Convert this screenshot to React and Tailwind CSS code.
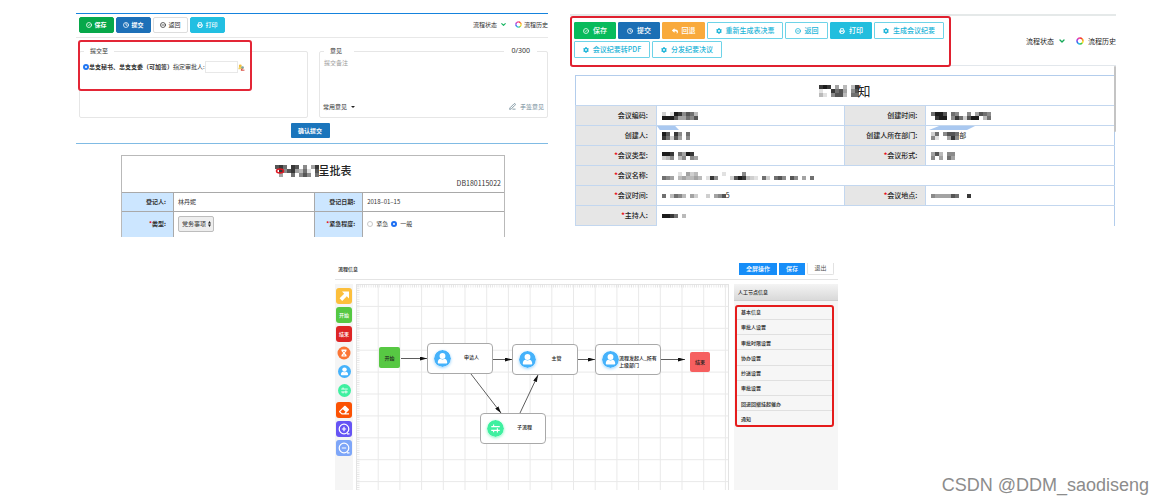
import React from "react";
import {
  CircleCheck, Clock, CircleMinus, Printer, ChevronDown, PenLine,
} from "lucide-react";
import { FaReply, FaEraser, FaCog } from "react-icons/fa";

/* Censored text drawn as grey cells: 0 is black, 9 is near white, "." is empty. */
const SHADES = ["#1c1c1c", "#383838", "#555555", "#707070", "#8a8a8a", "#a3a3a3", "#bababa", "#cfcfcf", "#e1e1e1", "#f1f1f1"];

function Mosaic({ rows, cell = 4, className = "" }) {
  const width = Math.max(...rows.map((r) => r.length)) * cell;
  const height = rows.length * cell;
  return (
    <svg width={width} height={height} className={"shrink-0 " + className} shapeRendering="crispEdges" aria-hidden="true">
      {rows.map((row, y) =>
        row.split("").map((c, x) =>
          c === "." ? null : <rect key={x + "-" + y} x={x * cell} y={y * cell} width={cell} height={cell} fill={SHADES[+c]} />
        )
      )}
    </svg>
  );
}

function Ring({ className }) {
  const colors = ["#f5392f", "#f99a1c", "#f4df26", "#43c84b", "#25b9e0", "#3b62ec", "#a43be0", "#ee3d9c"];
  return (
    <svg viewBox="0 0 16 16" className={"shrink-0 " + className} aria-hidden="true">
      {colors.map((c, i) => (
        <circle key={c} cx="8" cy="8" r="6" fill="none" stroke={c} strokeWidth="3" strokeDasharray="4.8 33" transform={`rotate(${i * 45 - 90} 8 8)`} />
      ))}
    </svg>
  );
}

function Person({ className }) {
  return (
    <svg viewBox="0 0 18 18" className={"shrink-0 " + className} aria-hidden="true">
      <circle cx="9" cy="9" r="9" fill="#45b2fb" />
      <circle cx="9" cy="6.4" r="3.1" fill="#fff" />
      <path d="M4 13.2c0-2.6 1.4-4 3-4 .6.6 1.2.8 2 .8s1.4-.2 2-.8c1.600 0 3 1.400 3 4 0 .7-.5 1-1.100 1H5.100C4.500 14.200 4 13.900 4 13.200Z" fill="#fff" />
    </svg>
  );
}

function Swap({ className }) {
  return (
    <svg viewBox="0 0 18 18" className={"shrink-0 " + className} aria-hidden="true">
      <circle cx="9" cy="9" r="9" fill="#3ff0a0" />
      <path d="M4.500 7h9M4.500 11h9M7 4.800V7M11 8.800v4.400M7 13V11" stroke="#fff" strokeWidth="1.200" fill="none" />
    </svg>
  );
}

function Status({ large }) {
  return (
    <div className={large ? "flex items-center text-[7px] leading-none" : "flex items-center text-[6px] leading-none"}>
      <span>流程状态</span>
      <ChevronDown className={large ? "ml-1 size-2 text-[#14a957]" : "ml-[3px] size-[7px] text-[#1cb765]"} strokeWidth={4} />
      <a href="#history" className={large ? "ml-[10px] flex items-center gap-1" : "ml-2 flex items-center gap-[2px]"}>
        <Ring className={large ? "size-2" : "size-[7px]"} />
        流程历史
      </a>
    </div>
  );
}

const leftButtons = [
  ["保存", CircleCheck, "bg-[#07a84a] border-[#07a84a] text-white font-bold"],
  ["提交", Clock, "bg-[#1d70b8] border-[#1d70b8] text-white font-bold"],
  ["返回", CircleMinus, "bg-white border-[#dddddd] text-[#333]"],
  ["打印", Printer, "bg-[#22bfe2] border-[#22bfe2] text-white font-medium"],
];

const labelLeft = "border-r border-[#a9a9a9] bg-[#cce6ff] p-0 pr-[7px] text-right font-bold";

function ApprovalForm() {
  return (
    <section className="relative self-start pt-[13px] text-[6px] leading-none text-[#333]">
      <div className="h-px bg-[#1583dd]" />
      <header className="flex items-start justify-between border-b border-[#e8e8e8] pt-[3px] pb-1 pl-[3px]">
        <div className="flex gap-[2px]">
          {leftButtons.map(([label, Icon, tone]) => (
            <button key={label} className={"flex h-4 w-[35px] items-center justify-center gap-[2px] rounded-[2px] border " + tone}>
              <Icon className="size-[6px]" strokeWidth={3} />
              {label}
            </button>
          ))}
        </div>
        <div className="pt-[4px]"><Status /></div>
      </header>

      <div className="grid grid-cols-[1fr_1fr] gap-[11px] pt-[9px] pl-[3px]">
        <fieldset className="h-[71px] min-w-0 rounded-[2px] border border-[#e6e6e6]">
          <legend className="ml-[4px] px-[6px] leading-[8px]">提交至</legend>
          <div className="flex items-center pt-[6px] pl-[3px] whitespace-nowrap">
            <input id="secretary" type="radio" name="target" defaultChecked className="m-0 size-[6px] shrink-0 appearance-none rounded-full border-2 border-[#2277f2] bg-white" />
            <label htmlFor="secretary" className="font-bold">总支秘书、总支支委（可加签）</label>
            <label htmlFor="approver">指定审批人:</label>
            <input id="approver" className="h-3 w-[33px] min-w-0 border border-[#e8e8e8] bg-white" />
            <button aria-label="选择审批人" className="shrink-0">
              <svg viewBox="0 0 8 8" className="size-[7px]">
                <circle cx="2.600" cy="2.200" r="1.700" fill="#f0bd3d" />
                <path d="M.4 6c0-2 1-2.800 2.200-2.800S5 4 5 6Z" fill="#efcf62" />
                <circle cx="5.200" cy="4" r="1.500" fill="#7ba5a0" />
                <path d="M3.200 7.600c0-1.700.8-2.500 2-2.500s2.200.8 2.200 2.500Z" fill="#d8473c" />
                <path d="M5 6h2v1H5Z" fill="#f4f0e8" />
              </svg>
            </button>
          </div>
        </fieldset>
        <div className="relative">
          <fieldset className="h-[71px] min-w-0 rounded-[2px] border border-[#e6e6e6]">
            <legend className="ml-[4px] pr-3 pl-[6px] leading-[8px]"><label htmlFor="remark">意见</label></legend>
            <textarea id="remark" placeholder="提交备注" className="block h-[48px] w-full resize-none pt-[5px] pl-1 placeholder:text-[#9a9a9a]" />
            <div className="flex items-center justify-between px-[3px]">
              <button className="flex items-center gap-1">常用意见
                <svg viewBox="0 0 4 2" className="h-[2px] w-1"><path d="M0 0h4L2 2Z" fill="#222" /></svg>
              </button>
              <button className="flex items-center gap-1 text-[#78909c]"><PenLine className="size-[7px]" strokeWidth={3} />手签意见</button>
            </div>
          </fieldset>
          <span className="absolute top-0 right-[11px] bg-white px-[7px] font-['Noto_Sans','Noto_Sans_CJK_SC',sans-serif] text-[7px] leading-[8px]">0/300</span>
        </div>
      </div>

      <div className="flex justify-center pt-[5px] pb-[5px] pr-1">
        <button className="h-[15px] w-[39px] rounded-[1px] bg-[#1b75bc] font-bold text-white">确认提交</button>
      </div>
      <div className="h-px bg-[#80bbe4]" />

      <div className="mt-[11px] mr-[43px] ml-[45px] border border-b-0 border-[#b9b9b9]">
        <div className="pt-[8px] pb-[5px]">
          <h2 className="relative flex items-center justify-center text-[11px] leading-[13px] font-medium text-[#222]">
            <Mosaic cell={4} rows={["213.12.4.51", ".14215638.2", ".5..3.424.3"]} />
            呈批表
            <svg viewBox="0 0 10 6" className="absolute left-[153px] h-[6px] w-[10px]" aria-hidden="true">
              <ellipse cx="5" cy="3" rx="3.500" ry="2" fill="none" stroke="#e01722" strokeWidth="1.500" />
            </svg>
          </h2>
          <p className="pt-[3px] pr-[3px] text-right text-[7px] leading-none">DB180115022</p>
        </div>
        <table className="w-full table-fixed border-collapse">
          <colgroup><col className="w-[13.500%]" /><col className="w-[37%]" /><col className="w-[12.500%]" /><col className="w-[37%]" /></colgroup>
          <tbody>
            <tr className="h-[19px] border-t border-[#a9a9a9]">
              <th className={labelLeft}>登记人:</th>
              <td className="border-r border-[#a9a9a9] p-0 pl-1">林丹妮</td>
              <th className={labelLeft}>登记日期:</th>
              <td className="p-0 pl-1">2018–01–15</td>
            </tr>
            <tr className="h-[25px] border-t border-[#a9a9a9]">
              <th className={labelLeft}><span className="text-red-600">*</span><label htmlFor="kind">类型:</label></th>
              <td className="border-r border-[#a9a9a9] p-0 pl-1">
                <span className="relative flex w-[36px] items-center">
                  <select id="kind" className="h-4 w-[36px] appearance-none rounded-[2px] border border-[#bdbdbd] bg-[#eeeeee] px-[3px] text-[6px] leading-none">
                    <option>党务事项</option>
                  </select>
                  <svg viewBox="0 0 3 6" className="pointer-events-none absolute right-[3px] h-[6px] w-[3px]"><path d="M0 2.500 1.500 0 3 2.500ZM0 3.500h3L1.500 6Z" fill="#222" /></svg>
                </span>
              </td>
              <th className={labelLeft}><span className="text-red-600">*</span>紧急程度:</th>
              <td className="p-0 pl-1">
                <div className="flex items-center gap-[3px]">
                  <input id="urgent" type="radio" name="urgency" className="m-0 size-[6px] appearance-none rounded-full border border-[#c8c8c8] bg-white" />
                  <label htmlFor="urgent">紧急</label>
                  <input id="normal" type="radio" name="urgency" defaultChecked className="m-0 size-[6px] appearance-none rounded-full border-2 border-[#1d6ff2] bg-white" />
                  <label htmlFor="normal">一般</label>
                </div>
              </td>
            </tr>
          </tbody>
        </table>
      </div>
      <div className="pointer-events-none absolute top-[40px] left-[2px] h-[51px] w-[174px] rounded-[3px] border-2 border-[#e32636]" />
    </section>
  );
}

const outline = "border-[#6ed3e8] bg-white text-[#1bb4d8]";
const rightButtons = [
  ["保存", CircleCheck, "w-[42px] border-[#08bb5c] bg-[#08bb5c] text-white"],
  ["提交", Clock, "w-[42px] border-[#1b6fb5] bg-[#1b6fb5] text-white"],
  ["回退", FaReply, "w-[43px] border-[#f9aa3c] bg-[#f9aa3c] text-white"],
  ["重新生成表决票", FaCog, "w-[76px] " + outline],
  ["返回", CircleMinus, "w-[43px] " + outline],
  ["打印", Printer, "w-[42px] border-[#22bede] bg-[#22bede] text-white"],
  ["生成会议纪要", FaCog, "w-[70px] " + outline],
  ["会议纪要转PDF", FaCog, "w-[76px] " + outline],
  ["分发纪要决议", FaCog, "w-[70px] " + outline],
];

const meetingRows = [
  [["会议编码:", ["7.8014236", "000255342"]], ["创建时间:", ["3002.34..4.5234", ".100.4137200.63"]]],
  [["创建人:", ["02.14.3", "13725.4"]], ["创建人所在部门:", ["73.4223", "48..514"], "部"]],
  [["*会议类型:", ["001.3501", "764.64.45"]], ["*会议形式:", ["526.44", "4.5.35"]]],
  [["*会议名称:", ["....8.576......8....4............", "345.656656.814...7201678.37.324.24.5.3"]]],
  [["*会议时间:", ["3.6346.57..7.542"], "5"], ["*会议地点:", ["4555523..1"]]],
  [["*主持人:", ["0013.6"]]],
];

function Label({ text }) {
  const required = text.startsWith("*");
  return (
    <th className="border border-[#c3d7ef] bg-[#e6e6e6] p-0 pr-2 text-right font-medium">
      {required && <span className="font-bold text-red-600">*</span>}
      {required ? text.slice(1) : text}
    </th>
  );
}

function MeetingNotice() {
  return (
    <section className="relative self-start pt-[14px] text-[7px] leading-none text-[#222]">
      <div className="h-[2px] bg-[#e5e9e9]" />
      <header className="flex items-start justify-between border-b border-[#e2e7ec] pt-[6px] pb-[7px] pl-[4px]">
        <div className="flex max-w-[374px] flex-wrap gap-[2px]">
          {rightButtons.map(([label, Icon, tone]) => (
            <button key={label} className={"flex h-[17px] items-center justify-center gap-1 rounded-[1px] border font-medium whitespace-nowrap " + tone}>
              <Icon className="size-[6px]" strokeWidth={Icon === FaCog || Icon === FaReply ? 0 : 3} />
              {label}
            </button>
          ))}
        </div>
        <div className="pt-[15px]"><Status large /></div>
      </header>
      <div className="pt-[9px] pr-px pl-[5px]">
        <div className="flex h-[30px] items-center justify-center border border-b-0 border-[#b3cdec] text-[13px]">
          <h2 className="flex items-center">
            <Mosaic cell={4} className="mr-[-2px]" rows={["101.5.6.61", "8..1325.42", "68.4226.33"]} />
            知
          </h2>
        </div>
        <table className="w-full table-fixed border-collapse border-x border-[#b3cdec]">
          <colgroup><col className="w-[15%]" /><col className="w-[35%]" /><col className="w-[15%]" /><col className="w-[35%]" /></colgroup>
          <tbody>
            {meetingRows.map((cells, i) => (
              <tr key={i} className="h-5 border-t border-[#c3d7ef]">
                {cells.map(([label, rows, tail]) => (
                  <React.Fragment key={label}>
                    <Label text={label} />
                    <td colSpan={cells.length === 1 ? 3 : 1} className="p-0 pl-[5px]">
                      <span className="relative flex items-center">
                        <Mosaic rows={rows} />
                        {tail}
                        {i === 1 && (
                          <svg viewBox="0 0 46 4" preserveAspectRatio="none" className={label === "创建人:" ? "absolute -top-[6px] -left-[5px] h-1 w-[22px]" : "absolute -top-[6px] -left-[2px] h-1 w-[46px]"} aria-hidden="true">
                            <path d={label === "创建人:" ? "M0 0h38l8 4H6Z" : "M10 0h36l-8 4H0Z"} fill="#a9c8f0" />
                          </svg>
                        )}
                      </span>
                    </td>
                  </React.Fragment>
                ))}
              </tr>
            ))}
          </tbody>
        </table>
      </div>
      <div className="pointer-events-none absolute top-[16px] left-0 h-[51px] w-[381px] rounded-[3px] border-2 border-[#e0202f]" />
      <div className="absolute top-[66px] right-0 h-[66px] w-[2px] rounded-full bg-[#c4c4c4]" />
    </section>
  );
}

const settings = ["基本信息", "审批人设置", "审批时限设置", "协办设置", "抄送设置", "审批设置", "回退回撤挂起催办", "通知"];

const nodes = [
  ["申请人", "left-[70px] top-[58px] w-[66px]", "person"],
  ["主管", "left-[155px] top-[59px] w-[66px]", "person"],
  ["流程发起人_所有上级部门", "left-[238px] top-[59px] w-[66px]", "person"],
  ["子流程", "left-[123px] top-[128px] w-[66px]", "swap"],
];

const links = [
  [44, 73.500, 70, 73.500], [136, 74.500, 155, 74.500], [221, 74.500, 238, 74.500],
  [304, 74.500, 328, 74.500], [114, 89, 144, 128], [163, 128, 181, 90],
];

const tool = "flex size-4 items-center justify-center rounded-[3px] text-white ";

function FlowDesigner() {
  return (
    <section className="text-[5px] leading-none font-medium text-[#222]">
      <header className="flex items-start justify-between border-b border-[#e4e4e4] pt-px pr-1 pb-1 pl-[3px]">
        <h2 className="pt-[3px]">流程信息</h2>
        <div className="flex gap-[2px] text-[6px]">
          <button className="h-3 w-[38px] bg-[#168df8] font-medium text-white">全屏操作</button>
          <button className="h-3 w-[26px] bg-[#168df8] font-medium text-white">保存</button>
          <button className="h-3 w-[27px] rounded-b-[2px] border border-t-0 border-[#e2e2e2] font-normal text-[#555]">退出</button>
        </div>
      </header>
      <div className="grid h-[210px] grid-cols-[18px_1fr_104px] pt-1">
        <aside className="flex flex-col items-center gap-[3px] bg-[#f5f5f5] pt-1">
          <button aria-label="连线" className={tool + "bg-[#fcbf3c]"}>
            <svg viewBox="0 0 16 16" className="size-4"><path d="M6 3.500h7v7l-2.200-2.200-4.600 4.600-2.600-2.600 4.600-4.600Z" fill="#fff" /></svg>
          </button>
          <button className={tool + "bg-[#55c843]"}>开始</button>
          <button className={tool + "bg-[#dd2525]"}>结束</button>
          <button aria-label="定时" className="flex size-4 items-center justify-center">
            <svg viewBox="0 0 14 14" className="size-[14px]"><circle cx="7" cy="7" r="6.500" fill="#fb7535" /><path d="M4.500 3.500h5v1.500L7.800 7l1.700 2v1.500h-5V9l1.700-2-1.700-2Z" fill="#fff" /><path d="M6 5h2L7 6.300ZM6 9.500h2L7 8.300Z" fill="#fb7535" /></svg>
          </button>
          <button aria-label="人工节点" className="flex size-4 items-center justify-center"><Person className="size-[13px]" /></button>
          <button aria-label="子流程" className="flex size-4 items-center justify-center"><Swap className="size-[13px]" /></button>
          <button aria-label="清除" className={tool + "bg-[#fb5204]"}><FaEraser className="size-[10px]" /></button>
          <button aria-label="放大" className={tool + "bg-[#6654f4]"}>
            <svg viewBox="0 0 16 16" className="size-4" fill="none" stroke="#fff" strokeWidth="1.200"><circle cx="8" cy="8" r="4.800" /><path d="M8 5.800v4.400M5.800 8h4.400M11 12.800h2.500" /></svg>
          </button>
          <button aria-label="缩小" className={tool + "bg-[#7ea6f8]"}>
            <svg viewBox="0 0 16 16" className="size-4" fill="none" stroke="#fff" strokeWidth="1.200"><circle cx="8" cy="8" r="4.800" /><path d="M5.800 8h4.400M11 12.800h2.500" /></svg>
          </button>
        </aside>

        <div className="relative mr-[5px] ml-[3px] overflow-hidden border-t border-r border-l border-[#e3e3e3]">
          <svg className="absolute inset-0 size-full" aria-hidden="true">
            <defs>
              <pattern id="grid" width="21.700" height="21.900" patternUnits="userSpaceOnUse">
                <path d="M21.200 0v21.900M0 21.400h21.700" stroke="#e9e9e9" fill="none" />
              </pattern>
              <pattern id="ticksX" width="2.170" height="4" patternUnits="userSpaceOnUse"><path d="M1 0v2.500" stroke="#d4d4d4" strokeWidth=".6" /></pattern>
              <pattern id="ticksY" width="4" height="2.190" patternUnits="userSpaceOnUse"><path d="M0 1h2.500" stroke="#d4d4d4" strokeWidth=".6" /></pattern>
              <marker id="arrow" viewBox="0 0 7 4" refX="7" refY="2" markerWidth="7" markerHeight="4" markerUnits="userSpaceOnUse" orient="auto"><path d="M0 0 7 2 0 4Z" fill="#111" /></marker>
            </defs>
            <rect width="100%" height="100%" fill="url(#grid)" />
            <rect width="100%" height="4" fill="url(#ticksX)" />
            <rect width="4" height="100%" fill="url(#ticksY)" />
            {links.map(([x1, y1, x2, y2]) => (
              <line key={x1} x1={x1} y1={y1} x2={x2} y2={y2} stroke="#333" strokeWidth=".8" markerEnd="url(#arrow)" />
            ))}
          </svg>
          <div className="absolute top-[62px] left-[22px] flex size-[21px] items-center justify-center rounded-[2px] bg-[#57c843]">开始</div>
          {nodes.map(([label, place, kind]) => (
            <div key={label} className={"absolute flex h-[31px] items-center rounded-[4px] border border-[#a9a9a9] bg-white pl-[6px] " + place}>
              {kind === "person"
                ? <Person className="size-[17px] rounded-full shadow-[0_1px_3px_#9fd4fb]" />
                : <Swap className="size-[17px] rounded-full shadow-[0_1px_3px_#8ff5c5]" />}
              <span className={label.length > 4 ? "flex-1 pt-1 leading-[7px]" : "flex-1 pb-[3px] text-center leading-[7px]"}>{label}</span>
            </div>
          ))}
          <div className="absolute top-[67px] left-[333px] flex size-[20px] items-center justify-center rounded-[2px] bg-[#f65f5f]">结束</div>
        </div>

        <aside className="relative bg-[#f6f6f6]">
          <h3 className="flex h-[17px] items-center border-b border-[#cfcfcf] bg-linear-to-b from-[#f4f4f4] to-[#d9d9d9] pl-1">人工节点信息</h3>
          <ul className="mt-1 grid h-[122px] auto-rows-fr pr-[5px] pl-[3px]">
            {settings.map((s) => (
              <li key={s} className="flex items-center border-b border-[#e0e0e0] pl-1 last:border-b-0">{s}</li>
            ))}
          </ul>
          <div className="pointer-events-none absolute top-[21px] left-px h-[122px] w-[99px] rounded-[3px] border-2 border-[#e51c1c]" />
        </aside>
      </div>
    </section>
  );
}

export default function App() {
  return (
    <main lang="zh-CN" className="relative min-h-screen bg-white font-['Noto_Sans_CJK_SC',sans-serif]">
      <div className="grid grid-cols-[472fr_546fr] gap-[22px] pr-[49px] pl-[76px]">
        <ApprovalForm />
        <MeetingNotice />
      </div>
      <div className="grid grid-cols-[335fr_503fr_327fr] pt-[25px]">
        <div className="col-start-2"><FlowDesigner /></div>
      </div>
      <p className="absolute right-4 bottom-2 font-['Liberation_Sans',sans-serif] text-[18px] leading-5 text-[#8c8c8c]">CSDN @DDM_saodiseng</p>
    </main>
  );
}
